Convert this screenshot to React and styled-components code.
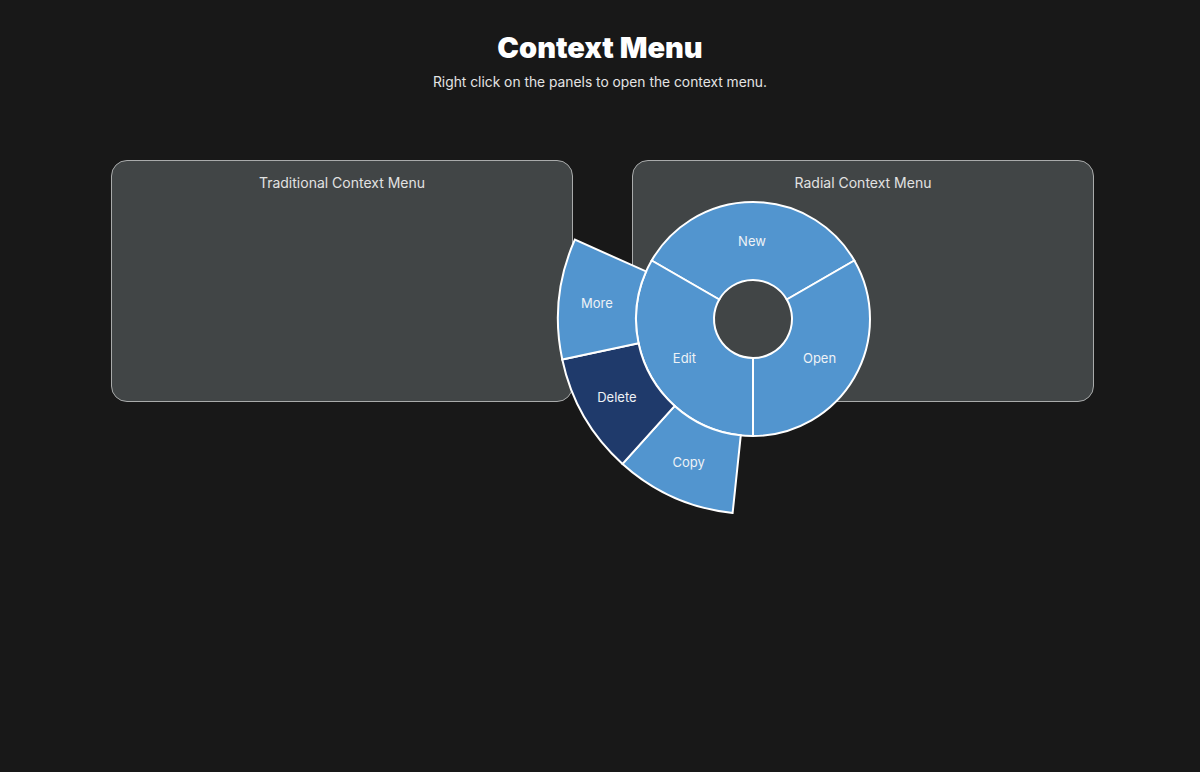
import React from 'react';
import styled, { createGlobalStyle } from 'styled-components';

const GlobalStyle = createGlobalStyle`
  html, body {
    margin: 0;
    padding: 0;
    background: #181818;
    font-family: Inter, "Noto Sans", sans-serif;
    color: #e6e6e6;
  }
`;

const Page = styled.div`
  min-height: 772px;
  padding-top: 29px;
  box-sizing: border-box;
`;

const Header = styled.header`
  text-align: center;
`;

const Title = styled.h1`
  margin: 0;
  font-family: Inter, sans-serif;
  font-weight: 900;
  font-size: 29px;
  line-height: 38px;
  color: #ffffff;
`;

const Subtitle = styled.p`
  margin: 6px 0 0;
  font-size: 13.8px;
  line-height: 18px;
  color: #e4e4e4;
`;

const Panels = styled.div`
  display: grid;
  grid-template-columns: 462px 462px;
  gap: 59px;
  justify-content: center;
  margin-top: 69px;
  padding-left: 5px;
`;

const Panel = styled.section`
  position: relative;
  height: 242px;
  box-sizing: border-box;
  background: #414546;
  border: 1px solid #a9abab;
  border-radius: 16px;
  padding-top: 13px;
  text-align: center;
  font-size: 14px;
  line-height: 17px;
  color: #e2e2e2;
  z-index: ${(p) => (p.$front ? 2 : 1)};
`;

// opened menu, centred on the click point inside the panel
const MenuLayer = styled.div`
  position: absolute;
  left: -80px;
  top: -42px;
  width: 400px;
  height: 400px;
`;

const Label = styled.text`
  font-family: Inter, sans-serif;
  font-size: 13px;
  fill: #eef2f6;
`;

const CX = 200;
const CY = 200;
const rad = (d) => (d * Math.PI) / 180;
const pt = (r, a) => [CX + r * Math.sin(rad(a)), CY - r * Math.cos(rad(a))];

const sector = (r0, r1, a0, a1) => {
  const large = a1 - a0 > 180 ? 1 : 0;
  const [x1, y1] = pt(r1, a0);
  const [x2, y2] = pt(r1, a1);
  const [x3, y3] = pt(r0, a1);
  const [x4, y4] = pt(r0, a0);
  return `M${x1} ${y1} A${r1} ${r1} 0 ${large} 1 ${x2} ${y2} L${x3} ${y3} A${r0} ${r0} 0 ${large} 0 ${x4} ${y4} Z`;
};

const items = [
  { label: 'New', r0: 39, r1: 117, a0: -60, a1: 60 },
  { label: 'Open', r0: 39, r1: 117, a0: 60, a1: 180 },
  { label: 'Edit', r0: 39, r1: 117, a0: 180, a1: 300 },
  { label: 'Copy', r0: 117, r1: 195, a0: 186, a1: 222 },
  { label: 'Delete', r0: 117, r1: 195, a0: 222, a1: 258, active: true },
  { label: 'More', r0: 117, r1: 195, a0: 258, a1: 294 },
];

const RadialMenu = () => (
  <MenuLayer>
    <svg width="400" height="400" viewBox="0 0 400 400">
      {items.map((it) => {
        const mid = (it.a0 + it.a1) / 2;
        const [tx, ty] = pt((it.r0 + it.r1) / 2, mid);
        return (
          <g key={it.label}>
            <path
              d={sector(it.r0, it.r1, it.a0, it.a1)}
              fill={it.active ? '#1f3a6b' : '#5295cf'}
              stroke="#ffffff"
              strokeWidth="2"
            />
            <Label x={tx - 1} y={ty} textAnchor="middle" dominantBaseline="central">
              {it.label}
            </Label>
          </g>
        );
      })}
    </svg>
  </MenuLayer>
);

export default function App() {
  return (
    <>
      <GlobalStyle />
      <Page>
        <Header>
          <Title>Context Menu</Title>
          <Subtitle>Right click on the panels to open the context menu.</Subtitle>
        </Header>
        <Panels>
          <Panel>Traditional Context Menu</Panel>
          <Panel $front>
            Radial Context Menu
            <RadialMenu />
          </Panel>
        </Panels>
      </Page>
    </>
  );
}
